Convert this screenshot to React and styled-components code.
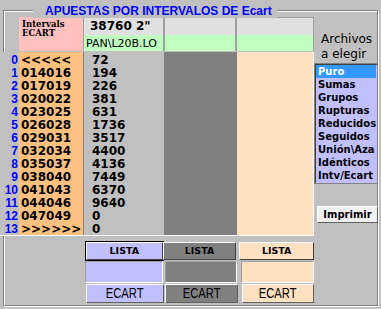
import React from "react";
import styled, { createGlobalStyle } from "styled-components";

const Global = createGlobalStyle`
  html, body { margin: 0; padding: 0; background: #c0c0c0; }
  body { width: 381px; height: 309px; overflow: hidden; }
`;

const Page = styled.div`
  width: 381px;
  height: 309px;
  box-sizing: border-box;
  padding: 10px 0 0 3px;
  background: #c0c0c0;
  font-family: "DejaVu Sans", sans-serif;
  color: #000;
`;

const Frame = styled.div`
  position: relative;
  box-sizing: border-box;
  width: 375px;
  height: 296px;
  border: 1px solid #808080;
  box-shadow: inset 1px 1px 0 #fff, 1px 1px 0 #fff;
  padding-top: 6px;
`;

const Title = styled.div`
  position: absolute;
  top: -7px;
  left: 29px;
  padding: 0 5px 0 12px;
  background: #c0c0c0;
  color: #0000ff;
  font: bold 12px/14px "Liberation Sans", sans-serif;
  white-space: nowrap;
`;

const Content = styled.div`
  display: flex;
  margin-left: -4px;
`;

const LeftPart = styled.div`
  display: flex;
  flex-direction: column;
  width: 314px;
`;

const RightPart = styled.div`
  display: flex;
  flex-direction: column;
  width: 66px;
`;

const cols = "19px 64px 81px 72px 78px";

const HeaderRow = styled.div`
  display: grid;
  grid-template-columns: ${cols};
  height: 34px;
`;

const PinkCell = styled.div`
  grid-column: 2;
  background: #ffc0c0;
  padding: 3px 0 0 3px;
  font: bold 8.5px/9px "DejaVu Serif", serif;
`;

const HeaderStack = styled.div`
  display: grid;
  grid-template-rows: 18px 16px;
`;

const TopCell = styled.div`
  background: #e0e0e0;
  border: 1px solid #a0a0a0;
  border-bottom: none;
  padding-left: 6px;
  font: bold 12px/16px "DejaVu Sans", sans-serif;
  white-space: nowrap;
  overflow: hidden;
`;

const GreenCell = styled.div`
  background: #c0ffc0;
  border-left: 1px solid #a0a0a0;
  border-right: 1px solid #a0a0a0;
  padding: 1px 0 0 2px;
  font: 11px/15px "DejaVu Sans", sans-serif;
  white-space: nowrap;
  overflow: hidden;
`;

const ListRow = styled.div`
  display: grid;
  grid-template-columns: ${cols};
  height: 183px;
  margin-top: 1px;
  border-bottom: 1px solid #fff;
`;

const List = styled.div`
  background: ${(p) => p.$bg};
  padding: 2px ${(p) => p.$pr || 0}px 0 ${(p) => p.$pl || 0}px;
  border-left: ${(p) => (p.$edge ? "1px solid #808080" : "none")};
  border-right: ${(p) => (p.$white ? "1px solid #fff" : "none")};
  overflow: hidden;
  text-align: ${(p) => p.$align || "left"};
`;

const Cell = styled.div`
  height: 13px;
  font: bold 12px/13px "DejaVu Sans", sans-serif;
  white-space: nowrap;
`;

const NumCell = styled.div`
  height: 13px;
  color: #0000ff;
  font: bold 12px/13px "Liberation Sans", sans-serif;
`;

const Controls = styled.div`
  display: flex;
  flex-direction: column;
  gap: 1px;
  margin-top: 6px;
`;

const CtrlRow = styled.div`
  display: flex;
  height: ${(p) => p.$h}px;
`;

const ListaButton = styled.div`
  box-sizing: border-box;
  width: ${(p) => p.$w}px;
  margin-left: ${(p) => p.$ml}px;
  background: ${(p) => p.$bg};
  border: 1px solid;
  border-color: #fff #404040 #404040 #fff;
  outline: ${(p) => (p.$focus ? "1px solid #000" : "none")};
  outline-offset: 0;
  font: bold 9.5px/16px "DejaVu Sans", sans-serif;
  text-align: center;
`;

const EditBox = styled.div`
  box-sizing: border-box;
  width: ${(p) => p.$w}px;
  margin-left: ${(p) => p.$ml}px;
  background: ${(p) => p.$bg};
  border: 1px solid;
  border-color: #a0a0a0 #fff #fff #a0a0a0;
`;

const EcartLabel = styled.div`
  box-sizing: border-box;
  width: ${(p) => p.$w}px;
  margin-left: ${(p) => p.$ml}px;
  background: ${(p) => p.$bg};
  border: 1px solid;
  border-color: #fff #606060 #606060 #fff;
  font: 14px/17px "Liberation Sans", sans-serif;
  text-align: center;
  white-space: nowrap;
`;

const Narrow = styled.span`
  display: inline-block;
  transform: scaleX(0.8);
`;

const Label = styled.div`
  margin-top: 15px;
  padding-left: 7px;
  font: 12px/15px "DejaVu Sans", sans-serif;
`;

const ListBox = styled.div`
  box-sizing: border-box;
  margin-top: 1px;
  height: 121px;
  border: 1px solid #808080;
  box-shadow: inset 1px 1px 0 #404040;
  padding: 1px;
  background: #c0c0ff;
`;

const Item = styled.div`
  height: 13px;
  padding-left: 2px;
  font: bold 10px/13px "DejaVu Sans", sans-serif;
  white-space: nowrap;
  overflow: hidden;
  background: ${(p) => (p.$sel ? "#3399ff" : "transparent")};
  color: ${(p) => (p.$sel ? "#fff" : "#000")};
`;

const PrintButton = styled.div`
  box-sizing: border-box;
  margin: 22px 0 0 3px;
  width: 61px;
  height: 17px;
  background: #f0f0f0;
  border: 1px solid;
  border-color: #fff #606060 #606060 #fff;
  font: bold 10px/15px "DejaVu Sans", sans-serif;
  text-align: center;
`;

const rows = [
  ["0", "<<<<<", "72"],
  ["1", "014016", "194"],
  ["2", "017019", "226"],
  ["3", "020022", "381"],
  ["4", "023025", "631"],
  ["5", "026028", "1736"],
  ["6", "029031", "3517"],
  ["7", "032034", "4400"],
  ["8", "035037", "4136"],
  ["9", "038040", "7449"],
  ["10", "041043", "6370"],
  ["11", "044046", "9640"],
  ["12", "047049", "0"],
  ["13", ">>>>>>", "0"],
];

const items = [
  "Puro",
  "Sumas",
  "Grupos",
  "Rupturas",
  "Reducidos",
  "Seguidos",
  "Unión\\Aza",
  "Idénticos",
  "Intv/Ecart",
];

const LAV = "#c0c0ff";
const GRAY = "#808080";
const PEACH = "#ffe0c0";

export default function App() {
  return (
    <Page>
      <Global />
      <Frame>
        <Title>APUESTAS POR INTERVALOS DE Ecart</Title>
        <Content>
          <LeftPart>
            <HeaderRow>
              <PinkCell>
                Intervals
                <br />
                ECART
              </PinkCell>
              <HeaderStack>
                <TopCell>38760 2"</TopCell>
                <GreenCell>PAN\L20B.LO</GreenCell>
              </HeaderStack>
              <HeaderStack>
                <TopCell />
                <GreenCell />
              </HeaderStack>
              <HeaderStack>
                <TopCell />
                <GreenCell />
              </HeaderStack>
            </HeaderRow>
            <ListRow>
              <List $bg="#c0c0c0" $align="right" $pr={1}>
                {rows.map((r) => (
                  <NumCell key={r[0]}>{r[0]}</NumCell>
                ))}
              </List>
              <List $bg="#ffc080" $pl={2}>
                {rows.map((r) => (
                  <Cell key={r[0]}>{r[1]}</Cell>
                ))}
              </List>
              <List $bg="#c0c0c0" $pl={8} $edge>
                {rows.map((r) => (
                  <Cell key={r[0]}>{r[2]}</Cell>
                ))}
              </List>
              <List $bg={GRAY} $edge />
              <List $bg={PEACH} $edge $white />
            </ListRow>
            <Controls>
              <CtrlRow $h={18}>
                <ListaButton $w={77} $ml={86} $bg={LAV} $focus>LISTA</ListaButton>
                <ListaButton $w={74} $ml={0} $bg={GRAY}>LISTA</ListaButton>
                <ListaButton $w={75} $ml={3} $bg={PEACH}>LISTA</ListaButton>
              </CtrlRow>
              <CtrlRow $h={22}>
                <EditBox $w={78} $ml={85} $bg={LAV} />
                <EditBox $w={72} $ml={2} $bg={GRAY} />
                <EditBox $w={73} $ml={4} $bg={PEACH} />
              </CtrlRow>
              <CtrlRow $h={19}>
                <EcartLabel $w={78} $ml={86} $bg={LAV}><Narrow>ECART</Narrow></EcartLabel>
                <EcartLabel $w={73} $ml={1} $bg={GRAY}><Narrow>ECART</Narrow></EcartLabel>
                <EcartLabel $w={72} $ml={4} $bg={PEACH}><Narrow>ECART</Narrow></EcartLabel>
              </CtrlRow>
            </Controls>
          </LeftPart>
          <RightPart>
            <Label>
              Archivos
              <br />a elegir
            </Label>
            <ListBox>
              {items.map((t, i) => (
                <Item key={t} $sel={i === 0}>
                  {t}
                </Item>
              ))}
            </ListBox>
            <PrintButton>Imprimir</PrintButton>
          </RightPart>
        </Content>
      </Frame>
    </Page>
  );
}
